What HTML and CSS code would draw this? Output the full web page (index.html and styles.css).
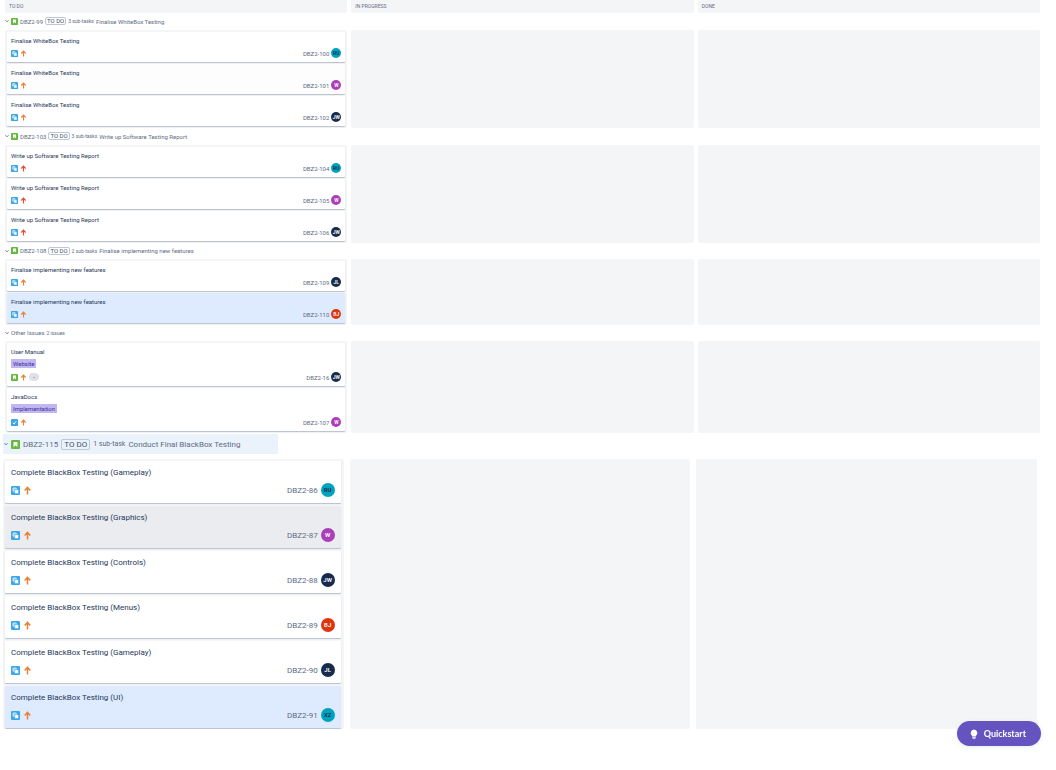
FILE: index.html
```
<!DOCTYPE html>
<html lang="en">
<head>
<meta charset="utf-8">
<title>Board</title>
<meta name="viewport" content="width=device-width, initial-scale=1">
<link rel="stylesheet" href="styles.css">
</head>
<body>
<svg class="defs" aria-hidden="true">
  <symbol id="chevron" viewBox="0 0 8 8"><path d="M1 2.5 4 5.5 7 2.5" fill="none" stroke="#42526e" stroke-width="1.6"/></symbol>
  <symbol id="story" viewBox="0 0 16 16"><rect width="16" height="16" rx="2" fill="#63ba3c"/><path d="M4.500 3.500h7v9.200L8 9.300l-3.500 3.400z" fill="#fff"/></symbol>
  <symbol id="subtask" viewBox="0 0 16 16"><rect width="16" height="16" rx="2" fill="#3ba7ea"/><rect x="3.500" y="3.500" width="6" height="6" rx="1" fill="#8fd0f7" stroke="#fff" stroke-width="1.200"/><rect x="6.500" y="6.500" width="7" height="7" rx="1" fill="#fff" stroke="#3ba7ea"/></symbol>
  <symbol id="task" viewBox="0 0 16 16"><rect width="16" height="16" rx="2" fill="#3ba7ea"/><path d="m4 8.500 3 3 5-6.500" fill="none" stroke="#fff" stroke-width="2"/></symbol>
  <symbol id="arrow" viewBox="0 0 16 16"><path d="M8 15V3M3 8l5-5.500L13 8" fill="none" stroke="currentColor" stroke-width="2.600"/></symbol>
  <symbol id="bulb" viewBox="0 0 16 20"><path d="M8 1a7 7 0 0 0-4 12.500V15h8v-1.500A7 7 0 0 0 8 1zM4.500 16.500h7V18l-1.500 1.500H6L4.500 18z" fill="#fff"/></symbol>
</svg>

<main>
  <div class="board">
    <div class="columns heads">
      <h2 class="head">TO DO</h2><h2 class="head">IN PROGRESS</h2><h2 class="head">DONE</h2>
    </div>

    <section>
      <button class="lane" type="button"><svg class="chevron"><use href="#chevron"/></svg><svg class="icon"><use href="#story"/></svg><span>DBZ2-99</span><span class="status">TO DO</span><span class="count">3 sub-tasks</span><span>Finalise WhiteBox Testing</span></button>
      <div class="columns">
        <div class="column">
          <article class="card"><h3 class="title">Finalise WhiteBox Testing</h3><div class="meta"><svg class="icon"><use href="#subtask"/></svg><svg class="icon arrow"><use href="#arrow"/></svg><a class="key" href="#">DBZ2-100</a><span class="avatar teal">RU</span></div></article>
          <article class="card hover"><h3 class="title">Finalise WhiteBox Testing</h3><div class="meta"><svg class="icon"><use href="#subtask"/></svg><svg class="icon arrow"><use href="#arrow"/></svg><a class="key" href="#">DBZ2-101</a><span class="avatar purple">W</span></div></article>
          <article class="card"><h3 class="title">Finalise WhiteBox Testing</h3><div class="meta"><svg class="icon"><use href="#subtask"/></svg><svg class="icon arrow"><use href="#arrow"/></svg><a class="key" href="#">DBZ2-102</a><span class="avatar navy">JW</span></div></article>
        </div>
        <div class="column"></div><div class="column"></div>
      </div>
    </section>

    <section>
      <button class="lane" type="button"><svg class="chevron"><use href="#chevron"/></svg><svg class="icon"><use href="#story"/></svg><span>DBZ2-103</span><span class="status">TO DO</span><span class="count">3 sub-tasks</span><span>Write up Software Testing Report</span></button>
      <div class="columns">
        <div class="column">
          <article class="card"><h3 class="title">Write up Software Testing Report</h3><div class="meta"><svg class="icon"><use href="#subtask"/></svg><svg class="icon arrow high"><use href="#arrow"/></svg><a class="key" href="#">DBZ2-104</a><span class="avatar teal">RU</span></div></article>
          <article class="card"><h3 class="title">Write up Software Testing Report</h3><div class="meta"><svg class="icon"><use href="#subtask"/></svg><svg class="icon arrow high"><use href="#arrow"/></svg><a class="key" href="#">DBZ2-105</a><span class="avatar purple">W</span></div></article>
          <article class="card"><h3 class="title">Write up Software Testing Report</h3><div class="meta"><svg class="icon"><use href="#subtask"/></svg><svg class="icon arrow high"><use href="#arrow"/></svg><a class="key" href="#">DBZ2-106</a><span class="avatar navy">JW</span></div></article>
        </div>
        <div class="column"></div><div class="column"></div>
      </div>
    </section>

    <section>
      <button class="lane compact" type="button"><svg class="chevron"><use href="#chevron"/></svg><svg class="icon"><use href="#story"/></svg><span>DBZ2-108</span><span class="status">TO DO</span><span class="count">2 sub-tasks</span><span>Finalise implementing new features</span></button>
      <div class="columns">
        <div class="column">
          <article class="card"><h3 class="title">Finalise implementing new features</h3><div class="meta"><svg class="icon"><use href="#subtask"/></svg><svg class="icon arrow"><use href="#arrow"/></svg><a class="key" href="#">DBZ2-109</a><span class="avatar navy">JL</span></div></article>
          <article class="card selected"><h3 class="title">Finalise implementing new features</h3><div class="meta"><svg class="icon"><use href="#subtask"/></svg><svg class="icon arrow"><use href="#arrow"/></svg><a class="key" href="#">DBZ2-110</a><span class="avatar red">BJ</span></div></article>
        </div>
        <div class="column"></div><div class="column"></div>
      </div>
    </section>

    <section>
      <button class="lane compact" type="button"><svg class="chevron"><use href="#chevron"/></svg><span>Other Issues</span><span class="count">2 issues</span></button>
      <div class="columns">
        <div class="column">
          <article class="card"><h3 class="title">User Manual</h3><span class="tag">Website</span><div class="meta"><svg class="icon"><use href="#story"/></svg><svg class="icon arrow"><use href="#arrow"/></svg><span class="estimate">-</span><a class="key" href="#">DBZ2-16</a><span class="avatar navy">JW</span></div></article>
          <article class="card"><h3 class="title">JavaDocs</h3><span class="tag">Implementation</span><div class="meta"><svg class="icon"><use href="#task"/></svg><svg class="icon arrow"><use href="#arrow"/></svg><a class="key" href="#">DBZ2-107</a><span class="avatar purple">W</span></div></article>
        </div>
        <div class="column"></div><div class="column"></div>
      </div>
    </section>
  </div>

  <div class="board large">
    <section>
      <button class="lane" type="button"><svg class="chevron"><use href="#chevron"/></svg><svg class="icon"><use href="#story"/></svg><span>DBZ2-115</span><span class="status">TO DO</span><span class="count">1 sub-task</span><span>Conduct Final BlackBox Testing</span></button>
      <div class="columns">
        <div class="column">
          <article class="card"><h3 class="title">Complete BlackBox Testing (Gameplay)</h3><div class="meta"><svg class="icon"><use href="#subtask"/></svg><svg class="icon arrow"><use href="#arrow"/></svg><a class="key" href="#">DBZ2-86</a><span class="avatar teal">RU</span></div></article>
          <article class="card hover"><h3 class="title">Complete BlackBox Testing (Graphics)</h3><div class="meta"><svg class="icon"><use href="#subtask"/></svg><svg class="icon arrow"><use href="#arrow"/></svg><a class="key" href="#">DBZ2-87</a><span class="avatar purple">W</span></div></article>
          <article class="card"><h3 class="title">Complete BlackBox Testing (Controls)</h3><div class="meta"><svg class="icon"><use href="#subtask"/></svg><svg class="icon arrow"><use href="#arrow"/></svg><a class="key" href="#">DBZ2-88</a><span class="avatar navy">JW</span></div></article>
          <article class="card"><h3 class="title">Complete BlackBox Testing (Menus)</h3><div class="meta"><svg class="icon"><use href="#subtask"/></svg><svg class="icon arrow"><use href="#arrow"/></svg><a class="key" href="#">DBZ2-89</a><span class="avatar red">BJ</span></div></article>
          <article class="card"><h3 class="title">Complete BlackBox Testing (Gameplay)</h3><div class="meta"><svg class="icon"><use href="#subtask"/></svg><svg class="icon arrow"><use href="#arrow"/></svg><a class="key" href="#">DBZ2-90</a><span class="avatar navy">JL</span></div></article>
          <article class="card selected"><h3 class="title">Complete BlackBox Testing (UI)</h3><div class="meta"><svg class="icon"><use href="#subtask"/></svg><svg class="icon arrow"><use href="#arrow"/></svg><a class="key" href="#">DBZ2-91</a><span class="avatar teal">XZ</span></div></article>
        </div>
        <div class="column"></div><div class="column"></div>
      </div>
    </section>
  </div>
</main>

<button class="quickstart" type="button"><svg class="bulb"><use href="#bulb"/></svg>Quickstart</button>
</body>
</html>
```
FILE: styles.css
```
* { box-sizing: border-box; }

body {
  margin: 0;
  background: #fff;
  color: #253858;
  font-family: Roboto, "Open Sans", sans-serif;
}

.defs { position: absolute; width: 0; height: 0; }

h2, h3 { margin: 0; font-weight: 400; }

svg { display: block; flex: none; }

.board {
  padding: 0 16px 0 5px;
  font-size: 6px;
}

.columns {
  display: grid;
  grid-template-columns: repeat(3, minmax(0, 1fr));
  gap: 4px;
}

.head {
  height: 13px;
  padding-left: 4px;
  border-radius: 0 0 2px 2px;
  background: #f4f5f7;
  color: #5e6c84;
  font-size: 5px;
  line-height: 13px;
}

.lane {
  display: flex;
  align-items: center;
  gap: 2px;
  height: 17px;
  padding: 0 0 1px;
  border: 0;
  background: none;
  color: #5e6c84;
  font: inherit;
  white-space: nowrap;
}

.lane.compact { height: 16px; }

.chevron { width: 4px; height: 4px; }
.icon { width: 7px; height: 7px; }

.status {
  padding: 0 1px;
  border: 1px solid #c1c7d0;
  border-radius: 2px;
  line-height: 6px;
  color: #42526e;
}

.count { font-size: 5px; }

.column {
  display: flex;
  flex-direction: column;
  gap: 2px;
  padding: 2px;
  border-radius: 2px;
  background: #f4f5f7;
}

.card {
  display: flex;
  flex-direction: column;
  align-items: flex-start;
  padding: 4px;
  border-radius: 1px;
  background: #fff;
  box-shadow: 0 1px 1px #b9bfcc;
}

.card.hover { background: #fdfdfd; }
.card.selected { background: #deebff; }

.title {
  font-size: 6px;
  line-height: 9px;
}

.tag {
  margin-top: 3px;
  padding: 0 2px;
  background: #c0b6f2;
  color: #403294;
  line-height: 9px;
}

.meta {
  display: flex;
  align-items: center;
  gap: 2px;
  align-self: stretch;
  margin-top: 3px;
}

.tag + .meta { margin-top: 4px; }

.arrow { color: #e97f33; }
.arrow.high { color: #e5493a; }

.estimate {
  width: 10px;
  border-radius: 5px;
  background: #dfe1e6;
  line-height: 8px;
  text-align: center;
}

.key {
  margin-left: auto;
  color: #5e6c84;
  text-decoration: none;
}

.avatar {
  width: 10px;
  border-radius: 50%;
  color: #fff;
  font-size: 5px;
  font-weight: 600;
  line-height: 10px;
  text-align: center;
}

.teal { background: #00a3bf; color: #172b4d; }
.purple { background: #ac3fb9; }
.navy { background: #172b4d; }
.red { background: #de350b; }

.large {
  padding: 1px 19px 0 3px;
  font-size: 8px;
}

.large .columns { gap: 6px; }

.large .lane {
  gap: 3px;
  width: 275px;
  height: 20px;
  margin-bottom: 5px;
  padding: 0 0 0 1px;
  background: #eaf2fb;
}

.large .icon { width: 9px; height: 9px; }
.large .status { padding: 0 2px; line-height: 9px; }
.large .count { font-size: 7px; }

.large .column { gap: 3px; padding: 2px 3px 1px 2px; }

.large .card { padding: 5px 6px 6px; }
.large .card.hover { background: #ebecf0; }
.large .card.selected { background: #deebff; }

.large .title { font-size: 8px; line-height: 13px; }
.large .meta { gap: 3px; margin-top: 4px; }

.large .avatar {
  width: 14px;
  font-size: 6px;
  line-height: 14px;
}

.quickstart {
  position: fixed;
  right: 15px;
  bottom: 24px;
  display: flex;
  align-items: center;
  gap: 6px;
  height: 25px;
  padding: 0 15px 0 13px;
  border: 0;
  border-radius: 13px;
  background: #6554c0;
  box-shadow: 0 1px 4px #c1c7d066;
  color: #fff;
  font: 700 9px Lato, sans-serif;
}

.bulb { width: 8px; height: 10px; }
```
